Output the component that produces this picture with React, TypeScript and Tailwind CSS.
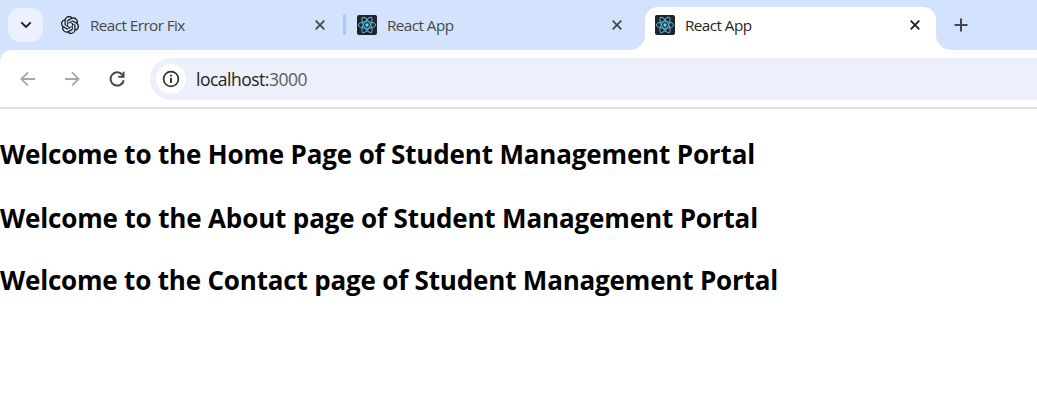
import type { ReactNode } from "react";
import { SiOpenai } from "react-icons/si";

function ReactLogo() {
  return (
    <svg width="20" height="20" viewBox="0 0 20 20" className="shrink-0">
      <rect width="20" height="20" rx="2" fill="#20232a" />
      <g fill="none" stroke="#53b9d3" strokeWidth="1">
        <ellipse cx="10" cy="10" rx="8.6" ry="3.3" />
        <ellipse cx="10" cy="10" rx="8.6" ry="3.3" transform="rotate(60 10 10)" />
        <ellipse cx="10" cy="10" rx="8.6" ry="3.3" transform="rotate(120 10 10)" />
      </g>
      <circle cx="10" cy="10" r="1.7" fill="#61dafb" />
    </svg>
  );
}

function CloseIcon({ color }: { color: string }) {
  return (
    <svg width="10" height="10" viewBox="0 0 10 10" className="shrink-0">
      <path d="M0.7 0.7L9.3 9.3M9.3 0.7L0.7 9.3" stroke={color} strokeWidth="1.8" />
    </svg>
  );
}

function Tab({ icon, title, active = false }: { icon: ReactNode; title: string; active?: boolean }) {
  return (
    <div className="flex h-[34px] w-[265px] items-center">
      <span className="flex w-5 justify-center">{icon}</span>
      <span
        className={
          active
            ? "ml-[10px] grow tracking-[-0.58px] text-[#1f1f1f]"
            : "ml-[10px] grow tracking-[-0.58px] text-[#474747]"
        }
      >
        {title}
      </span>
      <CloseIcon color={active ? "#1f1f1f" : "#474747"} />
    </div>
  );
}

export default function App() {
  return (
    <div className="h-[403px] w-full overflow-hidden bg-white font-['Open_Sans',sans-serif] text-black">
      <div className="flex h-[50px] text-[15.3px] leading-[20px] whitespace-nowrap">
        <div className="flex h-[50px] w-[645px] shrink-0 items-start rounded-br-[15px] bg-[#d3e3fd] pt-2 pl-2">
          <div className="flex h-[34px] w-[35px] items-center justify-center rounded-xl bg-[#ebf1fe]">
            <svg width="12" height="8" viewBox="0 0 12 8">
              <path d="M1.3 1.4L6 5.9l4.7-4.5" fill="none" stroke="#1f1f1f" strokeWidth="2" />
            </svg>
          </div>
          <div className="ml-[17px] flex">
            <Tab icon={<SiOpenai size={18} color="#111" />} title="React Error Fix" />
            <span className="mt-[6px] ml-[18px] h-[21px] w-[3px] rounded-full bg-[#a8c7fa]" />
            <div className="ml-[11px]">
              <Tab icon={<ReactLogo />} title="React App" />
            </div>
          </div>
        </div>
        <div className="h-[50px] w-[291px] shrink-0 bg-[#d3e3fd] pt-[7px]">
          <div className="h-[43px] rounded-t-[13px] bg-white pt-px pl-[10px]">
            <Tab active icon={<ReactLogo />} title="React App" />
          </div>
        </div>
        <div className="h-[50px] grow rounded-bl-[15px] bg-[#d3e3fd] pt-[18px] pl-[18px]">
          <svg width="14" height="14" viewBox="0 0 14 14">
            <path d="M7 .5v13M.5 7h13" stroke="#474747" strokeWidth="2" />
          </svg>
        </div>
      </div>

      <div className="bg-[linear-gradient(to_right,#d3e3fd_20px,white_20px)]">
        <div className="flex h-[59px] items-start rounded-tl-[12px] border-b-2 border-[#dfdfdf] bg-white pt-2 pl-5">
          <div className="flex h-[42px] items-center">
            <svg width="15" height="16" viewBox="0 0 15 16" fill="none" stroke="#a8a8a8" strokeWidth="1.8">
              <path d="M15 8H1.5M8 1.3L1.3 8L8 14.7" />
            </svg>
            <svg className="ml-[30px]" width="15" height="16" viewBox="0 0 15 16" fill="none" stroke="#a8a8a8" strokeWidth="1.8">
              <path d="M0 8h13.5M7 1.3L13.7 8L7 14.7" />
            </svg>
            <svg className="ml-[29px]" width="17" height="16" viewBox="0 0 17 16">
              <path d="M14.7 9.2A6.6 6.6 0 1 1 13.2 3.6L14.6 5" fill="none" stroke="#474747" strokeWidth="2" />
              <path d="M15.5 0.7V6.7H9.3V4.8h4.3V.7z" fill="#474747" />
            </svg>
          </div>
          <div className="ml-6 flex h-[42px] grow items-center rounded-l-full bg-[#ecf0fa] pl-[6px]">
            <span className="flex size-[30px] items-center justify-center rounded-full bg-white">
              <svg width="18" height="18" viewBox="0 0 18 18">
                <circle cx="9" cy="9" r="7.4" fill="none" stroke="#303030" strokeWidth="1.7" />
                <path d="M9 8v5M9 4.8v1.8" stroke="#303030" strokeWidth="1.9" />
              </svg>
            </span>
            <span className="ml-[10px] text-[17.5px] leading-6 tracking-[-0.5px] text-[#1f1f1f]">
              localhost:<span className="text-[#5b5b5b]">3000</span>
            </span>
          </div>
        </div>
      </div>

      <main className="text-[26px] leading-9 font-bold whitespace-nowrap">
        <h1 className="mt-[27px] tracking-[-0.16px]">Welcome to the Home Page of Student Management Portal</h1>
        <h1 className="mt-[28px] tracking-[-0.14px]">Welcome to the About page of Student Management Portal</h1>
        <h1 className="mt-[26px] tracking-[-0.18px]">Welcome to the Contact page of Student Management Portal</h1>
      </main>
    </div>
  );
}
